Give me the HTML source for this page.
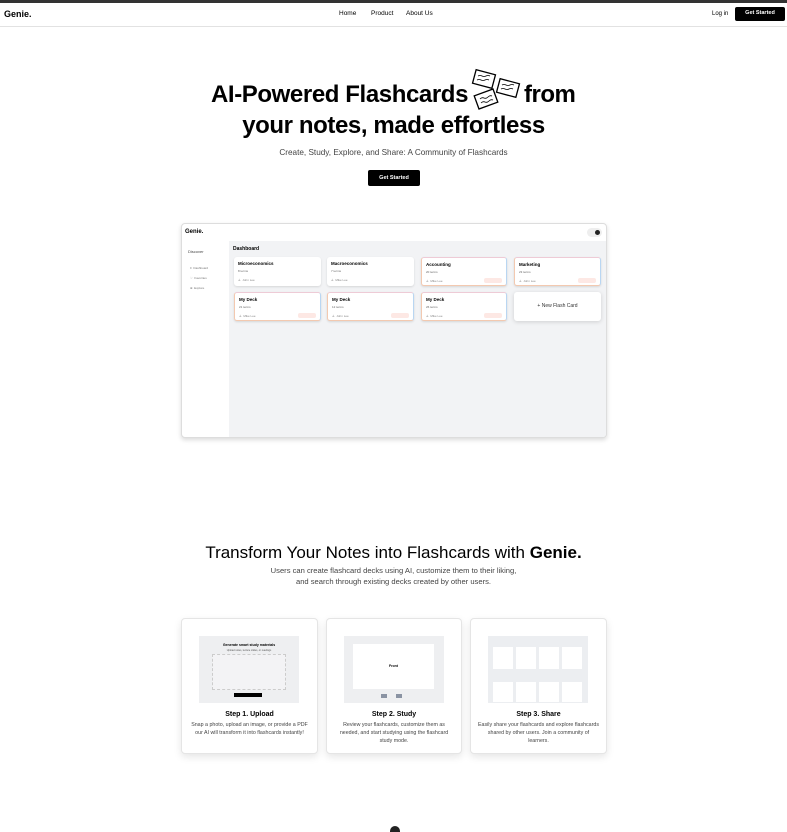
<!DOCTYPE html><html><head><style>
*{box-sizing:border-box;margin:0;padding:0}
body{width:787px;height:829px;overflow:hidden;background:#fff;font-family:"Liberation Sans",sans-serif;color:#000;position:relative}
.a{position:absolute}
.c{text-align:center}
.card{position:absolute;background:#fff;border-radius:3px;box-shadow:0 1px 2px rgba(0,0,0,.12)}
.grad{border:1px solid #f3c9b0;border-right-color:#b9d6f2;border-top-color:#eecbd6}
.ct{font-size:4.5px;font-weight:bold;position:absolute;left:4px;top:4px}
.cs{font-size:3px;color:#666;position:absolute;left:4px;top:12px}
.cf{font-size:3px;color:#888;position:absolute;left:4px;top:21px}
.tag{position:absolute;right:4px;top:20px;width:18px;height:5px;background:#fde8e4;border-radius:2px}
.step{position:absolute;top:618px;height:136px;border:1px solid #e5e5e5;border-radius:4px;box-shadow:0 3px 8px rgba(0,0,0,.1);background:#fff}
.img{position:absolute;left:17px;top:17px;width:100px;height:67px;background:#eeeff1}
.st{position:absolute;top:92px;width:100%;text-align:center;font-size:7px;font-weight:bold}
.sd{position:absolute;top:102px;left:6px;right:6px;text-align:center;font-size:5.3px;line-height:8px;color:#444}
</style></head><body>
<div class="a" style="left:0;top:0;width:787px;height:3px;background:#333"></div>
<div class="a" style="left:0;top:26px;width:787px;height:1px;background:#e2e2e2"></div>
<div class="a" style="left:4px;top:9px;font-size:9px;font-weight:bold">Genie.</div>
<div class="a" style="left:339px;top:10px;font-size:6.5px">Home</div>
<div class="a" style="left:371px;top:10px;font-size:6.5px">Product</div>
<div class="a" style="left:406px;top:10px;font-size:6.5px">About Us</div>
<div class="a" style="left:712px;top:11px;font-size:6px">Log in</div>
<div class="a c" style="left:735px;top:7px;width:50px;height:14px;background:#000;border-radius:2px;color:#fff;font-size:5.5px;font-weight:bold;line-height:13px">Get Started</div>

<div class="a" style="left:211px;top:81px;font-size:24px;font-weight:bold;letter-spacing:-0.4px">AI-Powered Flashcards</div>
<div class="a" style="left:524px;top:81px;font-size:24px;font-weight:bold;letter-spacing:-0.5px">from</div>
<svg class="a" style="left:470px;top:68px" width="54" height="44" viewBox="0 0 54 44" fill="#fff" stroke="#000" stroke-width="1.3">
<rect x="4" y="4" width="20" height="14" transform="rotate(15 14 11)"/><rect x="28" y="13" width="20" height="14" transform="rotate(15 38 20)"/><rect x="6" y="24" width="20" height="14" transform="rotate(-20 16 31)"/>
<path d="M8 8q2-1 4 0t4 0t4 0M7 12q2-1 4 0t4 0t4 0M32 17q2-1 4 0t4 0t4 0M31 21q2-1 4 0t4 0t4 0M10 31q2-2 4-1t4-1t4-1M11 35q2-2 4-1t4-1t4-1" fill="none" stroke-width=".8"/></svg>
<div class="a c" style="left:0;width:787px;top:112px;font-size:24px;font-weight:bold;letter-spacing:-0.4px">your notes, made effortless</div>
<div class="a c" style="left:0;width:787px;top:148px;font-size:8.2px;color:#444">Create, Study, Explore, and Share: A Community of Flashcards</div>
<div class="a c" style="left:368px;top:170px;width:52px;height:16px;background:#000;border-radius:2px;color:#fff;font-size:5.5px;font-weight:bold;line-height:16px">Get Started</div>

<div class="a" style="left:181px;top:223px;width:426px;height:215px;border:1px solid #ddd;border-radius:4px;box-shadow:0 2px 5px rgba(0,0,0,.15);overflow:hidden;background:#fff">
 <div class="a" style="left:3px;top:5px;font-size:6px;font-weight:bold">Genie.</div>
 <div class="a" style="left:405px;top:4px;width:15px;height:9px;background:#eee;border-radius:5px"></div>
 <div class="a" style="left:413px;top:6px;width:5px;height:5px;background:#222;border-radius:50%"></div>
 <div class="a" style="left:6px;top:25px;font-size:4px;color:#444">Discover</div>
 <div class="a" style="left:8px;top:39px;font-size:3px;color:#777;line-height:10px">≡ &nbsp;Dashboard<br>♡ &nbsp;Favorites<br>⊕ &nbsp;Explore</div>
 <div class="a" style="left:47px;top:17px;width:380px;height:200px;background:#f2f3f5">
  <div class="a" style="left:4px;top:5px;font-size:5px;font-weight:bold">Dashboard</div>
  <div class="card" style="left:5px;top:16px;width:87px;height:29px"><div class="ct">Microeconomics</div><div class="cs">8 terms</div><div class="cf">♙ &nbsp;John Lee</div></div>
  <div class="card" style="left:98px;top:16px;width:87px;height:29px"><div class="ct">Macroeconomics</div><div class="cs">7 terms</div><div class="cf">♙ &nbsp;Mike Lee</div></div>
  <div class="card grad" style="left:192px;top:16px;width:86px;height:29px"><div class="ct">Accounting</div><div class="cs">20 terms</div><div class="cf">♙ &nbsp;Mike Lee</div><div class="tag"></div></div>
  <div class="card grad" style="left:285px;top:16px;width:87px;height:29px"><div class="ct">Marketing</div><div class="cs">23 terms</div><div class="cf">♙ &nbsp;John Lee</div><div class="tag"></div></div>
  <div class="card grad" style="left:5px;top:51px;width:87px;height:29px"><div class="ct">My Deck</div><div class="cs">21 terms</div><div class="cf">♙ &nbsp;Mike Lee</div><div class="tag"></div></div>
  <div class="card grad" style="left:98px;top:51px;width:87px;height:29px"><div class="ct">My Deck</div><div class="cs">12 terms</div><div class="cf">♙ &nbsp;John Lee</div><div class="tag"></div></div>
  <div class="card grad" style="left:192px;top:51px;width:86px;height:29px"><div class="ct">My Deck</div><div class="cs">26 terms</div><div class="cf">♙ &nbsp;Mike Lee</div><div class="tag"></div></div>
  <div class="card c" style="left:285px;top:51px;width:87px;height:29px;font-size:5px;line-height:29px;color:#333;box-shadow:0 1px 4px rgba(0,0,0,.15)">+ New Flash Card</div>
 </div>
</div>

<div class="a c" style="left:0;width:787px;top:543px;font-size:17px">Transform Your Notes into Flashcards with <b>Genie.</b></div>
<div class="a c" style="left:0;width:787px;top:565px;font-size:7.6px;line-height:11px;color:#444">Users can create flashcard decks using AI, customize them to their liking,<br>and search through existing decks created by other users.</div>

<div class="step" style="left:181px;width:137px">
 <div class="img"><div class="a c" style="left:0;width:100px;top:7px;font-size:3.5px;font-weight:bold">Generate smart study materials</div><div class="a c" style="left:0;width:100px;top:13px;font-size:2.5px;color:#555">Upload notes, lecture slides, or readings</div><div class="a" style="left:13px;top:18px;width:74px;height:36px;border:1px dashed #ccc;background:#f3f3f5"></div><div class="a" style="left:35px;top:57px;width:28px;height:4px;background:#000"></div></div>
 <div class="st">Step 1. Upload</div><div class="sd">Snap a photo, upload an image, or provide a PDF our AI will transform it into flashcards instantly!</div></div>
<div class="step" style="left:326px;width:136px">
 <div class="img"><div class="a c" style="left:9px;top:8px;width:81px;height:45px;background:#fff;font-size:3.5px;font-weight:bold;line-height:45px">Front</div><div class="a" style="left:37px;top:58px;width:6px;height:4px;background:#8a93a3"></div><div class="a" style="left:52px;top:58px;width:6px;height:4px;background:#8a93a3"></div></div>
 <div class="st">Step 2. Study</div><div class="sd">Review your flashcards, customize them as needed, and start studying using the flashcard study mode.</div></div>
<div class="step" style="left:470px;width:137px">
 <div class="img" style="background:#eceef1">
  <div class="a" style="left:5px;top:11px;width:90px;height:22px;background:repeating-linear-gradient(90deg,#fff 0 20px,transparent 20px 23px)"></div>
  <div class="a" style="left:5px;top:46px;width:90px;height:20px;background:repeating-linear-gradient(90deg,#fff 0 20px,transparent 20px 23px)"></div>
 </div>
 <div class="st">Step 3. Share</div><div class="sd">Easily share your flashcards and explore flashcards shared by other users. Join a community of learners.</div></div>
<div class="a" style="left:390px;top:826px;width:10px;height:6px;background:#222;border-radius:5px 5px 0 0"></div>
</body></html>
